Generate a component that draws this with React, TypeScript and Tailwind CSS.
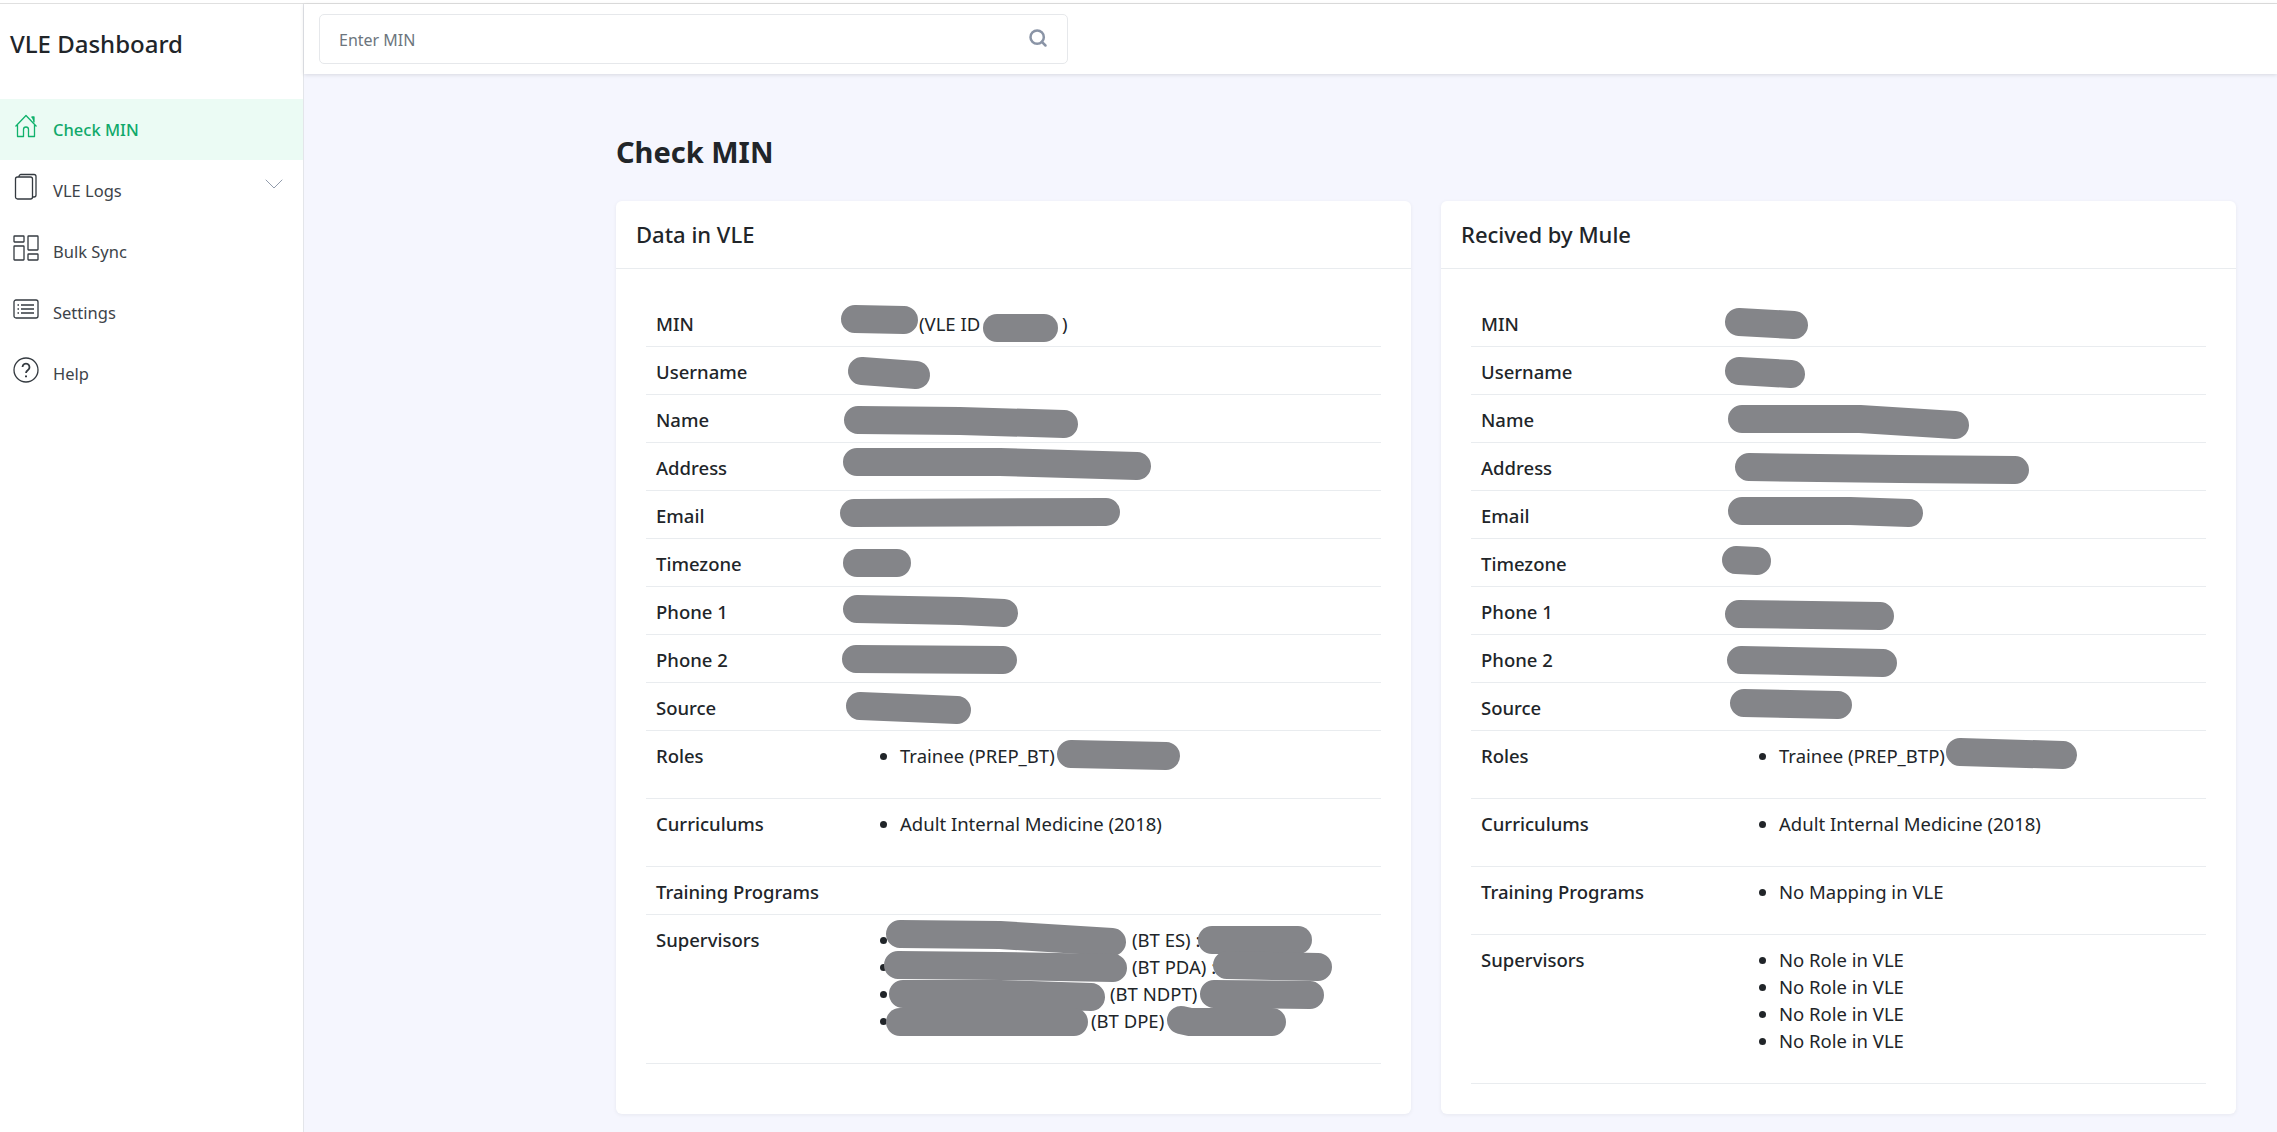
import { Search, ChevronDown } from "lucide-react";

type Row = { label: string; value?: string; list?: string[] };

// Blacked-out marker strokes over the private values, in page pixels relative to the table
type Stroke = { points: string; width: number };

const vleRows: Row[] = [
  { label: "MIN", value: "(VLE ID\u00A0\u00A0\u00A0\u00A0\u00A0\u00A0\u00A0\u00A0\u00A0\u00A0\u00A0\u00A0\u00A0\u00A0\u00A0\u00A0\u00A0)" },
  { label: "Username" },
  { label: "Name" },
  { label: "Address" },
  { label: "Email" },
  { label: "Timezone" },
  { label: "Phone 1" },
  { label: "Phone 2" },
  { label: "Source" },
  { label: "Roles", list: ["Trainee (PREP_BT)"] },
  { label: "Curriculums", list: ["Adult Internal Medicine (2018)"] },
  { label: "Training Programs" },
  { label: "Supervisors" },
];

const muleRows: Row[] = [
  { label: "MIN" },
  { label: "Username" },
  { label: "Name" },
  { label: "Address" },
  { label: "Email" },
  { label: "Timezone" },
  { label: "Phone 1" },
  { label: "Phone 2" },
  { label: "Source" },
  { label: "Roles", list: ["Trainee (PREP_BTP)"] },
  { label: "Curriculums", list: ["Adult Internal Medicine (2018)"] },
  { label: "Training Programs", list: ["No Mapping in VLE"] },
  { label: "Supervisors", list: ["No Role in VLE", "No Role in VLE", "No Role in VLE", "No Role in VLE"] },
];

const shift = (pts: number[][], dx: number, dy: number) =>
  pts.map(([x, y]) => `${x - dx},${y - dy}`).join(" ");

const vleStrokes: Stroke[] = [
  [[855, 318], [904, 319]],
  [[997, 327], [1044, 327]],
  [[862, 370], [916, 374]],
  [[858, 419], [960, 420], [1064, 423]],
  [[857, 461], [1000, 461], [1137, 465]],
  [[854, 512], [1106, 511]],
  [[857, 562], [897, 562]],
  [[857, 608], [960, 610], [1004, 612]],
  [[856, 658], [1003, 659]],
  [[860, 705], [957, 709]],
  [[1071, 753], [1166, 755]],
  [[900, 933], [1000, 934], [1112, 941]],
  [[1212, 939], [1298, 939]],
  [[898, 964], [1000, 965], [1113, 967]],
  [[1227, 964], [1318, 966]],
  [[903, 993], [1000, 993], [1091, 996]],
  [[1214, 993], [1310, 994]],
  [[900, 1021], [1074, 1021]],
  [[1181, 1019], [1190, 1021], [1272, 1021]],
].map((p) => ({ points: shift(p, 646, 298), width: 28 }));

const muleStrokes: Stroke[] = [
  [[1739, 321], [1794, 324]],
  [[1739, 370], [1791, 373]],
  [[1742, 418], [1860, 418], [1955, 424]],
  [[1749, 466], [1900, 468], [2015, 469]],
  [[1742, 510], [1850, 510], [1909, 512]],
  [[1736, 559], [1757, 560]],
  [[1739, 613], [1880, 615]],
  [[1741, 659], [1883, 662]],
  [[1744, 702], [1838, 704]],
  [[1960, 751], [2063, 754]],
].map((p) => ({ points: shift(p, 1471, 298), width: 28 }));

function HomeIcon() {
  return (
    <svg width="24" height="24" viewBox="0 0 24 24" fill="none" stroke="#10b26c" strokeWidth="1.3" strokeLinejoin="round">
      <path d="M1.5 12.5 12 1.5l10.5 11" />
      <path d="M3.5 11v11.5h6V15.5a2.5 2.5 0 0 1 5 0v7h6V11" />
      <path d="M17.5 3h2.5v5.5" fill="#10b26c" />
    </svg>
  );
}

function PagesIcon() {
  return (
    <svg width="24" height="28" viewBox="0 0 24 28" fill="none" stroke="#343a40" strokeWidth="1.3">
      <rect x="1.5" y="4" width="17" height="22" rx="2" />
      <path d="M5 4V3.5a2 2 0 0 1 2-2h13a2 2 0 0 1 2 2V22a2 2 0 0 1-2 2h-1.500" />
    </svg>
  );
}

function LayoutIcon() {
  return (
    <svg width="26" height="26" viewBox="0 0 26 26" fill="none" stroke="#343a40" strokeWidth="1.3">
      <rect x="1" y="1" width="10" height="6" rx="0.5" />
      <rect x="1" y="11" width="10" height="14" rx="0.5" />
      <rect x="15" y="1" width="10" height="14" rx="0.5" />
      <rect x="15" y="19" width="10" height="6" rx="0.5" />
    </svg>
  );
}

function ListIcon() {
  return (
    <svg width="26" height="20" viewBox="0 0 26 20" fill="none" stroke="#343a40" strokeWidth="1.3">
      <rect x="1" y="1" width="24" height="18" rx="2" />
      <path d="M8 6h13M8 10h13M8 14h13" />
      <path d="M4.500 6h1.500M4.500 10h1.500M4.500 14h1.500" />
    </svg>
  );
}

function HelpIcon() {
  return (
    <svg width="26" height="26" viewBox="0 0 26 26" fill="none" stroke="#343a40" strokeWidth="1.3">
      <circle cx="13" cy="13" r="12" />
      <path d="M9.500 10a3.500 3.500 0 1 1 5.500 3c-1.300.9-2 1.500-2 3" strokeWidth="1.800" />
      <path d="M13 18.500v1.800" strokeWidth="2" />
    </svg>
  );
}

function NavItem({
  icon,
  label,
  active,
  chevron,
}: {
  icon: React.ReactNode;
  label: string;
  active?: boolean;
  chevron?: boolean;
}) {
  return (
    <div
      className={
        active
          ? "flex h-[61px] items-center bg-[#ebfbf4] pt-[2px] text-[#10a96a]"
          : "flex h-[61px] items-center pt-[2px] text-[#3d4349]"
      }
    >
      <span className="flex w-[53px] shrink-0 justify-center pr-[1px] -mt-[10px]">{icon}</span>
      <span className={active ? "text-[16.500px] font-medium" : "text-[16.500px]"}>{label}</span>
      {chevron && <ChevronDown className="ml-auto mr-[13px] -mt-[16px] h-[32px] w-[32px] text-[#8a94a6]" strokeWidth={0.7} />}
    </div>
  );
}

function InfoTable({
  rows,
  strokes,
  labelWidth,
  valueOffset,
  children,
}: {
  rows: Row[];
  strokes: Stroke[];
  labelWidth: string;
  valueOffset: string;
  children?: React.ReactNode;
}) {
  return (
    <div className="relative">
      {rows.map((row) => (
        <div key={row.label} className="flex border-b border-[#e9ecef] pb-[9px] pl-[10px] pt-[11px] text-[18.500px] leading-[27px]">
          <div className={`${labelWidth} shrink-0 font-medium text-[#212529]`}>{row.label}</div>
          <div className="min-w-0 flex-1 text-[#212529]">
            {row.value && <div className="whitespace-nowrap pl-[77px]">{row.value}</div>}
            {row.list && (
              <ul className={`${valueOffset} mb-5 list-disc`}>
                {row.list.map((item, i) => (
                  <li key={i}>{item}</li>
                ))}
              </ul>
            )}
            {row.label === "Supervisors" && !row.list && children}
          </div>
        </div>
      ))}
      {/* marker strokes */}
      <svg className="pointer-events-none absolute left-0 top-0 h-full w-full overflow-visible" fill="none">
        {strokes.map((s, i) => (
          <polyline
            key={i}
            points={s.points}
            stroke="#848589"
            strokeWidth={s.width}
            strokeLinecap="round"
            strokeLinejoin="round"
          />
        ))}
      </svg>
    </div>
  );
}

function Card({ title, children }: { title: string; children: React.ReactNode }) {
  return (
    <div className="flex-1 rounded-md bg-white shadow-[0_1px_4px_rgba(0,0,0,0.06)]">
      <div className="flex h-[68px] items-center border-b border-[#e9ecef] px-5 text-[22px] font-medium text-[#212529]">
        {title}
      </div>
      <div className="p-[30px]">{children}</div>
    </div>
  );
}

export default function App() {
  return (
    <div className="flex min-h-screen flex-col bg-white font-['Noto_Sans',sans-serif] text-[#212529]">
      <div className="h-[4px] shrink-0 border-b border-[#e0e0e0]" />
      <div className="flex flex-1">
        <aside className="w-[304px] shrink-0 border-r border-[#e3e5ea] bg-white">
          <div className="flex h-[95px] items-start pl-[10px] pt-[22px] text-[24px] font-medium leading-9 text-[#212529]">
            VLE Dashboard
          </div>
          <nav>
            <NavItem icon={<HomeIcon />} label="Check MIN" active />
            <NavItem icon={<PagesIcon />} label="VLE Logs" chevron />
            <NavItem icon={<LayoutIcon />} label="Bulk Sync" />
            <NavItem icon={<ListIcon />} label="Settings" />
            <NavItem icon={<HelpIcon />} label="Help" />
          </nav>
        </aside>
        <div className="flex min-w-0 flex-1 flex-col bg-[#f5f6fe]">
          <header className="z-10 h-[70px] shrink-0 bg-white px-[15px] pt-[10px] shadow-[0_1px_4px_rgba(0,0,0,0.12)]">
            <div className="flex h-[50px] w-[749px] items-center rounded-[5px] border border-[#e6e8eb] pl-[19px] pr-[19px]">
              <span className="mt-[2px] text-[16px] text-[#6c757d]">Enter MIN</span>
              <Search className="ml-auto -mt-[3px] h-[20px] w-[20px] text-[#8a94a6]" strokeWidth={3} />
            </div>
          </header>
          <main className="pb-[18px] pl-[312px] pr-[41px] pt-[57px]">
            <h1 className="mb-[28px] text-[29px] font-bold leading-[42px] text-[#212529]">Check MIN</h1>
            <div className="flex gap-[30px]">
              <Card title="Data in VLE">
                <InfoTable rows={vleRows} strokes={vleStrokes} labelWidth="w-[186px]" valueOffset="pl-[58px]">
                  <ul className="mb-5 list-disc pl-[58px]">
                    <li className="pl-[232px]">(BT ES) :</li>
                    <li className="pl-[232px]">(BT PDA) :</li>
                    <li className="pl-[210px]">(BT NDPT)</li>
                    <li className="pl-[191px]">(BT DPE)</li>
                  </ul>
                </InfoTable>
              </Card>
              <Card title="Recived by Mule">
                <InfoTable rows={muleRows} strokes={muleStrokes} labelWidth="w-[240px]" valueOffset="pl-[58px]" />
              </Card>
            </div>
          </main>
        </div>
      </div>
    </div>
  );
}
